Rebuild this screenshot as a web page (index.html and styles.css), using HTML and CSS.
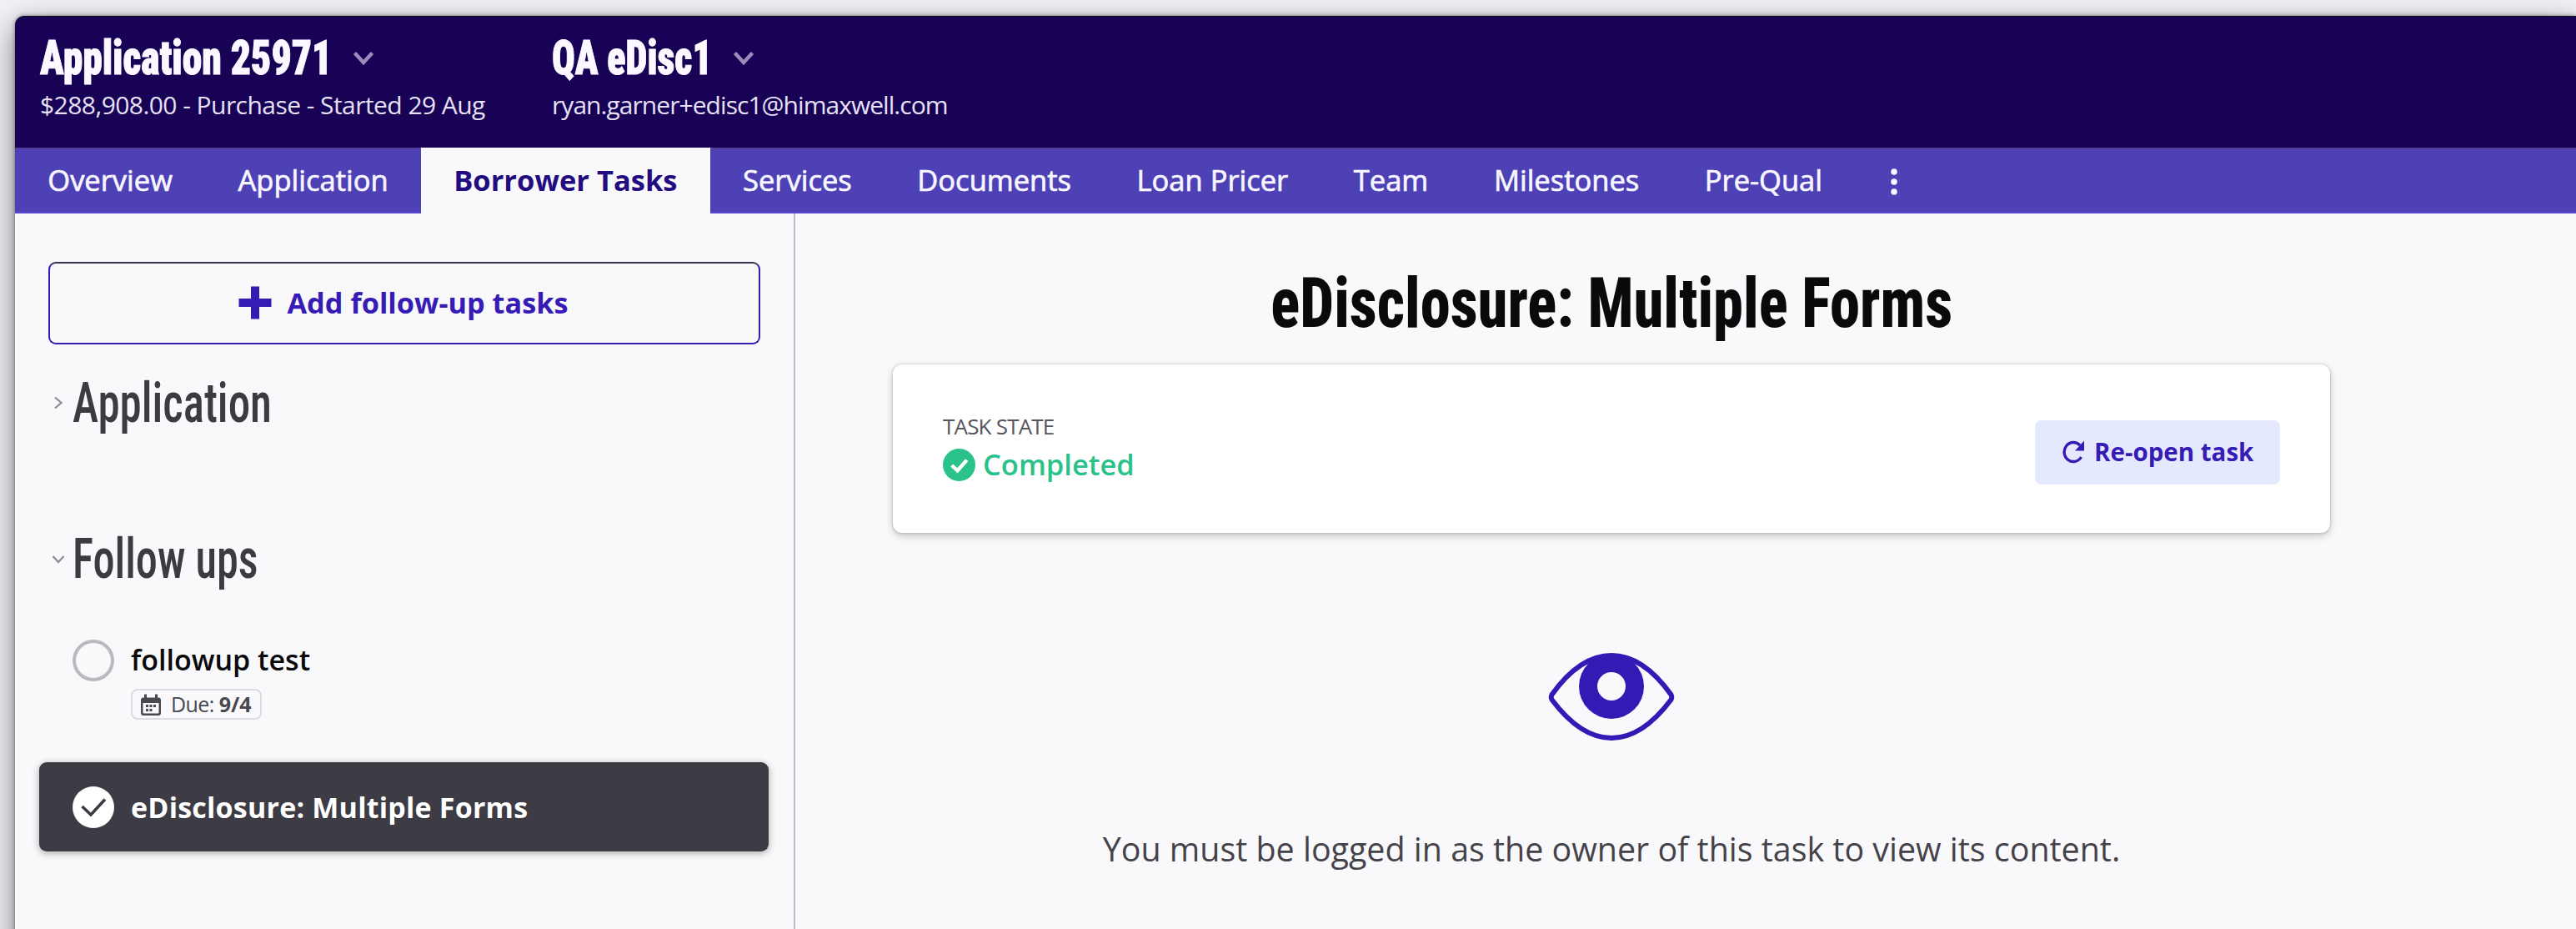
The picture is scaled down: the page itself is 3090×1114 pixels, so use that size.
FILE: index.html
```html
<!DOCTYPE html>
<html lang="en">
<head>
<meta charset="utf-8">
<title>Borrower Tasks</title>
<link rel="stylesheet" href="styles.css">
</head>
<body>
<div class="window">
  <header class="header">
    <div class="header-block">
      <div class="header-title"><span class="condensed title-app">Application 25971</span>
        <svg class="chevron" viewBox="0 0 26 18"><path d="M2.5 2.5 13 14 23.5 2.5"/></svg></div>
      <div class="header-sub">$288,908.00 - Purchase - Started 29 Aug</div>
    </div>
    <div class="header-block">
      <div class="header-title"><span class="condensed title-user">QA eDisc1</span>
        <svg class="chevron" viewBox="0 0 26 18"><path d="M2.5 2.5 13 14 23.5 2.5"/></svg></div>
      <div class="header-sub email">ryan.garner+edisc1@himaxwell.com</div>
    </div>
  </header>
  <nav class="tabs">
    <a class="tab"><span>Overview</span></a>
    <a class="tab"><span>Application</span></a>
    <a class="tab active"><span>Borrower Tasks</span></a>
    <a class="tab"><span>Services</span></a>
    <a class="tab"><span>Documents</span></a>
    <a class="tab"><span>Loan Pricer</span></a>
    <a class="tab"><span>Team</span></a>
    <a class="tab"><span>Milestones</span></a>
    <a class="tab"><span>Pre-Qual</span></a>
    <a class="more"><svg viewBox="0 0 10 34"><circle cx="5" cy="5" r="3.8"/><circle cx="5" cy="17" r="3.8"/><circle cx="5" cy="29" r="3.8"/></svg></a>
  </nav>
  <div class="body">
    <aside class="sidebar">
      <button class="add-button">
        <svg class="plus" viewBox="0 0 40 40"><path d="M20 0.5V39.5M0.5 20H39.5"/></svg>
        <span>Add follow-up tasks</span>
      </button>
      <h2 class="group group-application">
        <svg class="caret" viewBox="0 0 16 16"><path d="M4 1.5 11.5 8 4 14.5"/></svg>
        <span class="condensed">Application</span>
      </h2>
      <h2 class="group group-followups">
        <svg class="caret" viewBox="0 0 16 16"><path d="M1.5 5 8 12 14.5 5"/></svg>
        <span class="condensed">Follow ups</span>
      </h2>
      <div class="task">
        <span class="ring"></span>
        <div class="task-info">
          <span class="task-name">followup test</span>
          <span class="due">
            <svg viewBox="0 0 26 26"><path fill-rule="evenodd" d="M5 0.5h3v4h10v-4h3v4h1a3 3 0 0 1 3 3V23a3 3 0 0 1-3 3H4a3 3 0 0 1-3-3V7.5a3 3 0 0 1 3-3h1zM3.5 11v11.5a1 1 0 0 0 1 1h17a1 1 0 0 0 1-1V11z"/><path d="M7 13h3v3H7zM11.5 13h3v3h-3zM16 13h3v3h-3zM7 18h3v3H7zM11.5 18h3v3h-3z"/></svg>
            <span class="due-label">Due:</span> <b>9/4</b>
          </span>
        </div>
      </div>
      <div class="task selected">
        <svg class="done" viewBox="0 0 50 50"><circle cx="25" cy="25" r="25" fill="#fff"/><path d="M11.5 24 22 34 39 15.5" fill="none" stroke="#3d3b44" stroke-width="3.6"/></svg>
        <span class="task-name">eDisclosure: Multiple Forms</span>
      </div>
    </aside>
    <main class="main">
      <h1 class="page-title"><span class="condensed">eDisclosure: Multiple Forms</span></h1>
      <section class="card">
        <div class="state">
          <span class="state-label">TASK STATE</span>
          <span class="state-value">
            <svg viewBox="0 0 40 40"><circle cx="20" cy="20" r="20" fill="#2bc28a"/><path d="M11 20.5 18 27 29.5 14" fill="none" stroke="#fff" stroke-width="4.5"/></svg>
            <span>Completed</span>
          </span>
        </div>
        <button class="reopen">
          <svg viewBox="0 0 27 28"><path d="M22.5 20A11 11.5 0 1 1 21 6" fill="none" stroke="#371bb5" stroke-width="3.4"/><path d="M26 0.5V12.5H15z" fill="#371bb5"/></svg>
          <span>Re-open task</span>
        </button>
      </section>
      <svg class="eye" viewBox="0 0 152 106"><path d="M4.5 50Q38 3 76 3T147.5 50Q149 53 147.5 56Q113 102 76 102T4.5 56Q3 53 4.5 50Z" fill="none" stroke="#321bb5" stroke-width="6"/><circle cx="76" cy="40" r="39" fill="#321bb5"/><circle cx="76" cy="40" r="17" fill="#f9f9fc"/></svg>
      <p class="message"><span>You must be logged in as the owner of this task to view its content.</span></p>
    </main>
  </div>
</div>
</body>
</html>
```
FILE: styles.css
```css
* { box-sizing: border-box; }

body {
  margin: 0;
  height: 1114px;
  overflow: hidden;
  background: #f1f1f6;
  font-family: "Open Sans", "Noto Sans", sans-serif;
}

.window {
  display: flex;
  flex-direction: column;
  height: 1140px;
  margin: 19px 0 0 18px;
  background: #f9f9fc;
  border-radius: 11px 0 0 0;
  box-shadow: 0 0 5px rgba(0, 0, 0, 0.4), 0 12px 36px rgba(0, 0, 0, 0.5);
}

.condensed {
  display: inline-block;
  font-family: Roboto, sans-serif;
  font-stretch: 75%;
  white-space: nowrap;
  transform-origin: left center;
}

/* Header */
.header {
  flex: none;
  display: grid;
  grid-template-columns: 614px 1fr;
  height: 158px;
  padding: 20px 30px 0;
  background: #180255;
  border-top: 1px solid #101022;
  border-radius: 11px 0 0 0;
  color: #fbf9ff;
}

.header-title {
  display: flex;
  align-items: center;
  height: 60px;
  font-size: 57px;
  font-weight: 900;
  line-height: 58px;
  -webkit-text-stroke: 1px currentColor;
}

.title-app { width: 375px; transform: scaleX(0.834); }
.title-user { width: 217px; transform: scaleX(0.808); }

.chevron {
  width: 26px;
  height: 18px;
  fill: none;
  stroke: #9a8cba;
  stroke-width: 4.5;
}

.header-sub {
  margin-top: 6px;
  font-size: 30px;
  line-height: 40px;
  letter-spacing: -0.55px;
  white-space: nowrap;
  color: #e6e1f5;
}

.email { letter-spacing: -0.95px; }

/* Tabs */
.tabs {
  flex: none;
  display: flex;
  height: 79px;
  background: #4e41b6;
  border-top: 2px solid #56419a;
  border-bottom: 2px solid #5a48d0;
}

.tab {
  padding: 0 39.3px;
  font-size: 34.5px;
  font-weight: 500;
  line-height: 74px;
  color: #f8f6ff;
  white-space: nowrap;
  -webkit-text-stroke: 0.7px currentColor;
}

.tab.active {
  margin: -2px 0;
  padding-top: 2px;
  background: #f9f9fc;
  color: #230c80;
  font-weight: 700;
  -webkit-text-stroke: 0;
}

.more {
  display: flex;
  align-items: center;
  padding: 3px 0 0 42px;
}

.more svg { width: 10px; height: 34px; fill: #f8f6ff; }

/* Sidebar */
.body { flex: 1; display: flex; }

.sidebar {
  width: 936px;
  flex: none;
  padding-top: 58px;
  border-right: 2px solid #bbbbc0;
}

.add-button {
  display: flex;
  align-items: center;
  justify-content: center;
  gap: 18px;
  width: 854px;
  height: 99px;
  margin: 0 40px;
  padding: 0 2px 2px 0;
  border: 2.5px solid #371bb5;
  border-top-color: #34324a;
  border-radius: 9px;
  background: none;
  font: 700 34.3px/46px "Open Sans", sans-serif;
  color: #371bb5;
}

.plus { width: 40px; height: 40px; stroke: #371bb5; stroke-width: 10; }

.group {
  display: flex;
  align-items: center;
  height: 80px;
  margin: 0 0 0 44px;
  font-size: 67px;
  font-weight: 500;
  line-height: 80px;
  color: #3d3b42;
}

.group .condensed { margin-left: 9px; transform: scaleX(0.79); }
.group-application { margin-top: 30px; }
.group-followups { margin-top: 107px; }
.group-followups .condensed { transform: scaleX(0.78); }

.caret { width: 16px; height: 16px; fill: none; stroke: #8e8c94; stroke-width: 2.3; }

.task {
  display: flex;
  gap: 20px;
  margin: 53px 30px 0 29px;
  padding-left: 40px;
  font-size: 34px;
  line-height: 46px;
}

.ring {
  flex: none;
  width: 50px;
  height: 50px;
  margin-top: 4px;
  border: 4px solid #bab9be;
  border-radius: 50%;
}

.task-info { display: flex; flex-direction: column; align-items: flex-start; gap: 12px; padding-top: 5px; }
.task-name { font-weight: 600; color: #0a0a0c; }

.due {
  display: flex;
  align-items: center;
  height: 37px;
  padding: 0 10px 0 9px;
  border: 2px solid #dcdce0;
  border-radius: 8px;
  font-size: 25px;
  line-height: 33px;
  color: #4a484f;
}

.due svg { width: 26px; height: 26px; margin-right: 11px; fill: #4a484f; }
.due-label { margin-right: 6px; letter-spacing: -0.6px; }

.task.selected {
  align-items: center;
  height: 107px;
  margin-top: 51px;
  border-radius: 9px;
  background: #3d3b44;
  box-shadow: 0 2px 10px rgba(0, 0, 0, 0.32);
}

.selected .task-name { font-weight: 700; color: #fff; letter-spacing: 0.2px; }
.done { width: 50px; height: 50px; }

/* Main */
.main {
  display: flex;
  flex-direction: column;
  align-items: center;
  width: 1724px;
  margin-left: 117px;
  padding-top: 54px;
}

.page-title {
  height: 100px;
  margin: 0;
  font-size: 84px;
  font-weight: 800;
  line-height: 100px;
  color: #0a0a0c;
}

.page-title .condensed { transform: scaleX(0.864); transform-origin: center; }

.card {
  display: flex;
  align-items: center;
  justify-content: space-between;
  width: 1724px;
  height: 202px;
  margin-top: 27px;
  padding: 0 60px;
  border-radius: 11px;
  background: #fff;
  box-shadow: 0 0 3px rgba(0, 0, 0, 0.25), 0 4px 10px rgba(0, 0, 0, 0.2);
}

.state { display: flex; flex-direction: column; gap: 5px; margin-bottom: 3px; }

.state-label {
  font-size: 26px;
  line-height: 36px;
  letter-spacing: -0.8px;
  color: #56545c;
}

.state-value {
  display: flex;
  align-items: center;
  gap: 9px;
  font-size: 34.5px;
  font-weight: 600;
  line-height: 46px;
  color: #2bc28a;
}

.state-value svg { width: 39px; height: 39px; }

.reopen {
  display: flex;
  align-items: center;
  gap: 11px;
  width: 294px;
  height: 77px;
  margin-top: 8px;
  padding: 0 0 0 33px;
  border: 0;
  border-radius: 8px;
  background: #e5e9fe;
  font: 700 29.5px/40px "Open Sans", sans-serif;
  color: #371bb5;
  white-space: nowrap;
}

.reopen svg { flex: none; width: 27px; height: 28px; }

.eye { width: 152px; height: 106px; margin-top: 144px; }

.message {
  margin: 99px 0 0;
  font-size: 39.4px;
  line-height: 60px;
  color: #454349;
  white-space: nowrap;
}
```
